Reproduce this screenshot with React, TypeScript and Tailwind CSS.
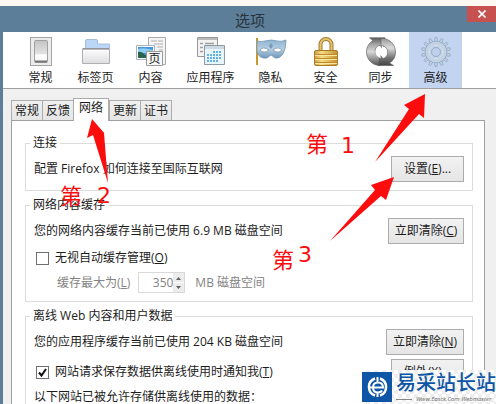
import type { ReactNode } from "react";
import clsx from "clsx";

const GeneralIcon = () => (
  <svg viewBox="0 0 32 30" className="h-[30px] w-8" aria-hidden="true">
    <defs>
      <linearGradient id="switch" x1="0" y1="0" x2="0" y2="1">
        <stop offset="0" stopColor="#c4c4c4" />
        <stop offset="0.6" stopColor="#e2e2e2" />
        <stop offset="0.65" stopColor="#fff" />
        <stop offset="1" stopColor="#f4f4f4" />
      </linearGradient>
    </defs>
    <rect x="5.5" y="0.5" width="21" height="28" fill="#ececec" stroke="#a3a3a3" />
    <rect x="9.5" y="3.5" width="13" height="22" rx="1" fill="url(#switch)" stroke="#a0a0a0" />
    <path d="M10 23.5h12v2H10z" fill="#777" />
  </svg>
);

const TabsIcon = () => (
  <svg viewBox="0 0 32 30" className="h-[30px] w-8" aria-hidden="true">
    <defs>
      <linearGradient id="folder" x1="0" y1="0" x2="0" y2="1">
        <stop offset="0" stopColor="#fff" />
        <stop offset="1" stopColor="#dddde0" />
      </linearGradient>
    </defs>
    <path d="M5.5 12V4q0-1.5 1.5-1.5h9q1.5 0 1.5 1.5V7h12v6h-24z" fill="#bcd6f6" stroke="#a3bee2" />
    <path d="M2.5 11.5h27v15h-27z" fill="url(#folder)" stroke="#b0b0b4" />
    <path d="M3 12h26" stroke="#77787c" />
  </svg>
);

const ContentIcon = () => (
  <svg viewBox="0 0 32 30" className="h-[30px] w-8" aria-hidden="true">
    <path d="M13.5.5h17v27h-17z" fill="#f4f4f4" stroke="#a9a9a9" />
    <path d="M16 4h6m-3 3h9m-5-3h5m-6 6h6m-4 3h4" stroke="#b0b0b0" />
    <path d="M1.5 8.5h18v14h-18z" fill="#fff" stroke="#a4b4c4" />
    <path d="M3 10h15v11H3z" fill="#4796d8" />
    <path d="M3 12q6-2 15 1v3H3z" fill="#8fcdf5" />
    <path d="M3 15q4-1 7 3l8 1v2H3z" fill="#29654e" />
    <path d="M11.5 14.5h16v14h-16z" fill="#f8f8f8" stroke="#9a9a9a" />
    <text x="13.5" y="26" fontSize="12" className="fill-[#222]">
      页
    </text>
  </svg>
);

const ApplicationsIcon = () => (
  <svg viewBox="0 0 32 30" className="h-[30px] w-8" aria-hidden="true">
    <path d="M2.5.5h20v19h-20z" fill="#f3f3f3" stroke="#989898" />
    <path d="M3 2h19" stroke="#b9bcbd" strokeWidth="2" />
    <path d="M5 6.5h3m2 0h9m-14 4h3m-3 4h3" stroke="#a0a0a0" strokeWidth="1.5" />
    <path d="M9.5 8.5h20v19h-20z" fill="#e8f5fd" stroke="#8b9aa5" />
    <path d="M10 10.5h19" stroke="#cddae2" strokeWidth="3" />
    <path
      d="M18 15h9m-15 3h15m-15 3h15m-15 3h12"
      stroke="#62b2e2"
      strokeWidth="2"
      strokeDasharray="2 1"
    />
  </svg>
);

const PrivacyIcon = () => (
  <svg viewBox="0 0 32 30" className="h-[30px] w-8" aria-hidden="true">
    <defs>
      <linearGradient id="mask" x1="0" y1="0" x2="0" y2="1">
        <stop offset="0" stopColor="#8fb4d0" />
        <stop offset="0.5" stopColor="#b6cee4" />
        <stop offset="1" stopColor="#6f96b8" />
      </linearGradient>
    </defs>
    <path d="M2 1v27" stroke="#c9972a" strokeWidth="2" />
    <path
      d="M2 4q4 1 8 0 6-2 12 0 5 1 9-1 0 9-3 14-3 5-8 4l-4-3-4 3Q4 22 2 15z"
      fill="url(#mask)"
      stroke="#7799b5"
      strokeWidth="0.8"
    />
    <path d="M5 13q3-4 9 0-5 4-9 0zm13 0q5-4 9-0-4 4-9 0z" fill="#fff" stroke="#66879f" strokeWidth="0.6" />
    <path d="M16 6l2 3-2 3-2-3z" fill="#7398b8" />
  </svg>
);

const SecurityIcon = () => (
  <svg viewBox="0 0 32 30" className="h-[30px] w-8" aria-hidden="true">
    <defs>
      <linearGradient id="lock" x1="0" y1="0" x2="1" y2="0">
        <stop offset="0" stopColor="#cf9c3a" />
        <stop offset="0.3" stopColor="#f6dc86" />
        <stop offset="1" stopColor="#c6912f" />
      </linearGradient>
    </defs>
    <path d="M10.5 14V7.500a5.500 5.500 0 0 1 11 0V14" fill="none" stroke="#a27a30" strokeWidth="4" />
    <path d="M10.5 14V7.500a5.500 5.500 0 0 1 11 0V14" fill="none" stroke="#e5c36a" strokeWidth="2" />
    <rect x="4.5" y="13.5" width="23" height="15" rx="1.5" fill="url(#lock)" stroke="#a97a2b" />
    <path d="M5 17.5h22m-22 4h22m-22 4h22" stroke="#bb8c34" />
    <path d="M5 18.5h22m-22 4h22m-22 4h22" stroke="#fbe69c" />
  </svg>
);

const SyncIcon = () => (
  <svg viewBox="0 0 32 30" className="h-[30px] w-8" aria-hidden="true">
    <defs>
      <linearGradient id="sync-left" x1="0" y1="0" x2="0" y2="1">
        <stop offset="0" stopColor="#5c5c5c" />
        <stop offset="0.25" stopColor="#a8a8a8" />
        <stop offset="0.5" stopColor="#d8d8d8" />
        <stop offset="1" stopColor="#555" />
      </linearGradient>
      <linearGradient id="sync-right" x1="0" y1="0" x2="0" y2="1">
        <stop offset="0" stopColor="#999" />
        <stop offset="0.35" stopColor="#dcdcdc" />
        <stop offset="0.7" stopColor="#777" />
        <stop offset="1" stopColor="#444" />
      </linearGradient>
    </defs>
    <path
      d="M16 28.5C8 29 1.500 23 1.500 15 1.500 10 4 6 8 3.500L4.500.8h15.500l-2 11.500-3-4c-4 1-5.500 4-4.500 7.500.8 3 3 5 6.500 5.500z"
      fill="url(#sync-left)"
      stroke="#666"
      strokeWidth="0.7"
    />
    <path
      d="M16 1.500C24 1 30.500 7 30.500 15c0 5-2 8.500-6 11l4 2.500H13l2-11 3 4c3.500-1 5-4 4.500-7.500C22 11 20 9 16 8.500z"
      fill="url(#sync-right)"
      stroke="#666"
      strokeWidth="0.7"
    />
    <path d="M14.500 9.500c-4 2-5 6-3 9l4 3v-3.500l2.500 2.500c4-2 5-6 3-9l-4-2.500v3z" fill="#fff" />
  </svg>
);

const AdvancedIcon = () => (
  <svg viewBox="0 0 32 30" className="h-[30px] w-8" aria-hidden="true">
    <g transform="translate(16 15)">
      {Array.from({ length: 14 }, (_, i) => (
        <path
          key={i}
          d="M-1.500-10.500l.4-4h2.200l.4 4z"
          transform={`rotate(${(i * 360) / 14})`}
          fill="#bccde0"
          stroke="#8da3bb"
          strokeWidth="0.6"
        />
      ))}
      <circle r="8.500" fill="none" stroke="#90a6bd" strokeWidth="5" />
      <circle r="8.500" fill="none" stroke="#c3d3e3" strokeWidth="4" />
      <circle r="4.500" fill="#bed0ea" stroke="#8ea5bf" strokeWidth="0.8" />
      <circle r="6.500" fill="none" stroke="#dde8f3" />
    </g>
  </svg>
);

const categories = [
  { label: "常规", icon: <GeneralIcon /> },
  { label: "标签页", icon: <TabsIcon /> },
  { label: "内容", icon: <ContentIcon /> },
  { label: "应用程序", icon: <ApplicationsIcon />, wide: true },
  { label: "隐私", icon: <PrivacyIcon /> },
  { label: "安全", icon: <SecurityIcon /> },
  { label: "同步", icon: <SyncIcon /> },
  { label: "高级", icon: <AdvancedIcon />, active: true },
];

const tabs = ["常规", "反馈", "网络", "更新", "证书"];

const Group = ({ title, children }: { title: string; children: ReactNode }) => (
  <fieldset className="min-w-0 border border-[#dcdcdc] px-2 pt-[5px] pb-2">
    <legend className="-ml-1 px-[3px] leading-4">{title}</legend>
    {children}
  </fieldset>
);

const PushButton = ({ children, className }: { children: ReactNode; className?: string }) => (
  <button
    type="button"
    className={clsx(
      "h-[26px] shrink-0 border border-[#acacac] bg-linear-to-b from-[#f2f2f2] to-[#e5e5e5] whitespace-nowrap",
      className
    )}
  >
    {children}
  </button>
);

const CheckRow = ({
  id,
  checked,
  children,
}: {
  id: string;
  checked?: boolean;
  children: ReactNode;
}) => (
  <div className="flex items-center gap-1.5 pl-0.5">
    <span className="relative flex size-[13px]">
      <input
        id={id}
        type="checkbox"
        defaultChecked={checked}
        className="peer size-[13px] appearance-none border border-[#707070] bg-white"
      />
      <svg
        viewBox="0 0 13 13"
        className="pointer-events-none absolute inset-0 hidden peer-checked:block"
        aria-hidden="true"
      >
        <path d="M3 6.500l2.500 3L10 3" fill="none" stroke="#111" strokeWidth="2" />
      </svg>
    </span>
    <label htmlFor={id}>{children}</label>
  </div>
);

const Annotations = () => (
  <div className="pointer-events-none absolute inset-0 text-[22px] leading-6 text-[#fb0d0d]">
    <svg width="496" height="404" className="absolute top-0 left-0 fill-[#fb0d0d]" aria-hidden="true">
      <path d="M425 94l-21 11 5 4-34 53 44-48 5 4z" />
      <path d="M92 119l-5 19 6-3 15 48-4-50 1 1z" />
      <path d="M394 177l-23 8 4 5-45 51 51-45 5 4z" />
    </svg>
    <span className="absolute top-[131px] left-[306px]">第</span>
    <span className="absolute top-[134px] left-[341px] font-['DejaVu_Sans']">1</span>
    <span className="absolute top-[183px] left-[60px]">第</span>
    <span className="absolute top-[184px] left-[97px] font-['DejaVu_Sans']">2</span>
    <span className="absolute top-[247px] left-[272px]">第</span>
    <span className="absolute top-[243px] left-[298px] font-['DejaVu_Sans']">3</span>
  </div>
);

const SiteBadge = () => (
  <div className="absolute right-0 bottom-0 flex h-[34px] w-[134px] items-center overflow-hidden bg-white bg-[repeating-conic-gradient(#eee_0_25%,#fff_0_50%)] bg-size-[8px_8px]">
    <svg viewBox="0 0 30 30" className="size-[30px] shrink-0" aria-hidden="true">
      <path fill="#0d56a5" d="M0 0h30v30H0z" />
      <path
        d="M13 6.500a9 9 0 0 0 0 17M18 6.500a9 9 0 0 1 0 17"
        fill="none"
        stroke="#fff"
        strokeWidth="2.500"
      />
      <path
        d="M6 15.500h15q0-5-5-5-5 0-5 5t5 5q3 0 4-2M15.500 5v6m0 9v5"
        fill="none"
        stroke="#fff"
        strokeWidth="2"
      />
    </svg>
    <div className="ml-1 whitespace-nowrap">
      <p className="text-[20px] leading-6 font-medium text-[#0d56a5]">易采站长站</p>
      <p className="flex items-center gap-1 text-[6px] leading-2 text-[#666] italic">
        <span className="w-4 border-t border-[#888]" />
        Www.Easck.Com Webmaster
      </p>
    </div>
  </div>
);

export default function App() {
  return (
    <div className="relative flex h-screen flex-col overflow-hidden bg-[#fdf8f1] pt-1.5 font-['Open_Sans','Noto_Sans_CJK_SC',sans-serif] text-[12px] leading-4 text-[#1c1c1c]">
      <header className="relative flex h-[26px] shrink-0 items-center justify-center bg-[#5d7e98] pt-0.5 pl-1">
        <h1 className="text-[15px] leading-5 text-[#27333d]">选项</h1>
        <button
          type="button"
          aria-label="关闭"
          className="absolute top-0 right-0 flex h-4 w-[29px] items-center justify-center bg-[#c75050]"
        >
          <svg viewBox="0 0 8 8" className="size-2" aria-hidden="true">
            <path d="M.5.500l7 7m0-7l-7 7" stroke="#fff" strokeWidth="1.600" />
          </svg>
        </button>
      </header>
      <div className="flex min-h-0 flex-1 flex-col border-l-[3px] border-[#5d7e98] bg-[#f0f0f0]">
        <nav className="flex shrink-0 gap-0.5 border-b border-[#a0a0a0] bg-white pl-[11px]">
          {categories.map(({ label, icon, wide, active }) => (
            <button
              key={label}
              type="button"
              className={clsx(
                "flex h-14 shrink-0 flex-col items-center pt-[5px]",
                wide ? "w-[63px]" : "w-[53px]",
                active && "bg-[#c2d4f0]"
              )}
            >
              {icon}
              <span className="mt-[3px] whitespace-nowrap">{label}</span>
            </button>
          ))}
        </nav>
        <main className="min-h-0 flex-1 pt-[9px] pr-[11px] pl-2">
          <div role="tablist" className="flex items-end">
            {tabs.map((tab) => (
              <button
                key={tab}
                type="button"
                role="tab"
                aria-selected={tab === "网络"}
                className={clsx(
                  "border border-b-0 border-[#acacac]",
                  tab === "网络"
                    ? "relative -mb-px h-[23px] bg-white px-[5px] pb-1"
                    : "-mr-px h-5 w-8 bg-linear-to-b from-[#f0f0f0] to-[#e6e6e6] px-[3px]"
                )}
              >
                {tab}
              </button>
            ))}
          </div>
          <section className="flex flex-col gap-1.5 border border-[#a0a0a0] bg-white pt-3.5 pr-[11px] pb-40 pl-[13px]">
            <Group title="连接">
              <div className="flex items-center justify-between">
                <p>配置 Firefox 如何连接至国际互联网</p>
                <PushButton className="w-[73px]">
                  设置(<u>E</u>)...
                </PushButton>
              </div>
            </Group>
            <Group title="网络内容缓存">
              <div className="flex flex-col gap-1.5">
                <div className="flex items-center justify-between">
                  <p>您的网络内容缓存当前已使用 6.9 MB 磁盘空间</p>
                  <PushButton className="w-[76px]">
                    立即清除(<u>C</u>)
                  </PushButton>
                </div>
                <CheckRow id="override">
                  无视自动缓存管理(<u>O</u>)
                </CheckRow>
                <div className="flex items-center pl-[23px] text-[#838383]">
                  <label htmlFor="limit">
                    缓存最大为(<u>L</u>)
                  </label>
                  <div className="ml-2 flex h-[21px] w-[47px] border border-[#d9d9d9]">
                    <input
                      id="limit"
                      type="text"
                      defaultValue="350"
                      disabled
                      className="min-w-0 flex-1 bg-white text-right"
                    />
                    <svg viewBox="0 0 11 19" className="w-[11px] bg-[#ececec]" aria-hidden="true">
                      <path d="M3 7l2.500-3L8 7zm0 6l2.500 3L8 13z" fill="#606060" />
                      <path d="M0 9.500h11" stroke="#fff" />
                    </svg>
                  </div>
                  <span className="ml-2.5">MB 磁盘空间</span>
                </div>
              </div>
            </Group>
            <Group title="离线 Web 内容和用户数据">
              <div className="flex flex-col gap-1">
                <div className="flex items-center justify-between">
                  <p>您的应用程序缓存当前已使用 204 KB 磁盘空间</p>
                  <PushButton className="w-[78px]">
                    立即清除(<u>N</u>)
                  </PushButton>
                </div>
                <div className="flex items-center justify-between">
                  <CheckRow id="notify" checked>
                    网站请求保存数据供离线使用时通知我(<u>T</u>)
                  </CheckRow>
                  <PushButton className="w-[73px]">
                    例外(<u>X</u>)...
                  </PushButton>
                </div>
                <p>以下网站已被允许存储供离线使用的数据：</p>
              </div>
            </Group>
          </section>
        </main>
      </div>
      <Annotations />
      <SiteBadge />
    </div>
  );
}
